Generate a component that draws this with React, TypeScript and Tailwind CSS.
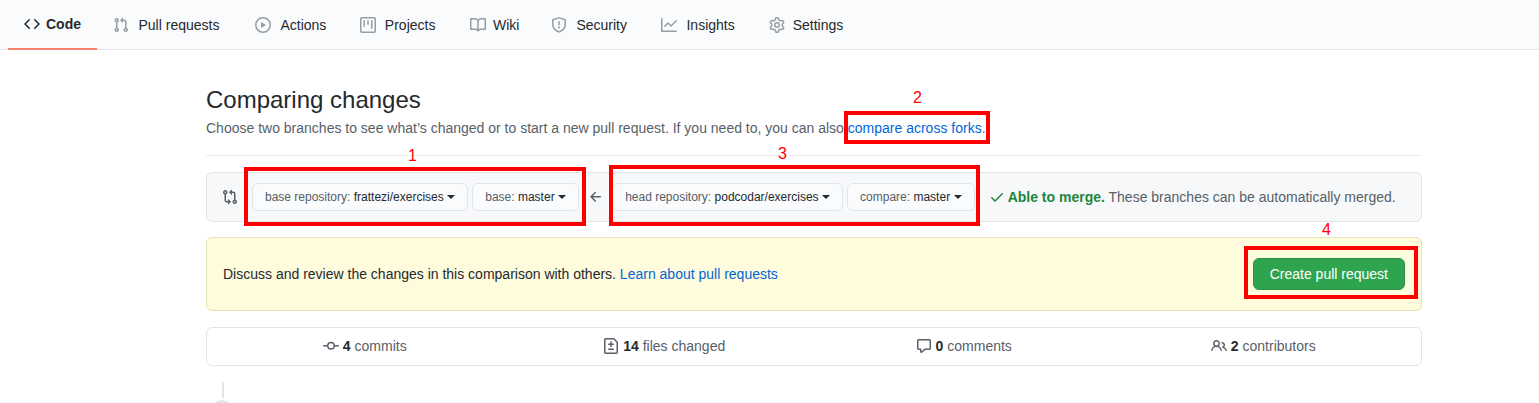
// octicons, 16px grid
const paths = {
  code: "M4.72 3.22a.75.75 0 011.06 1.06L2.06 8l3.72 3.72a.75.75 0 11-1.06 1.06L.47 8.53a.75.75 0 010-1.06l4.25-4.25zm6.56 0a.75.75 0 10-1.06 1.06L13.94 8l-3.72 3.72a.75.75 0 101.06 1.06l4.25-4.25a.75.75 0 000-1.06l-4.25-4.25z",
  pull: "M7.177 3.073L9.573.677A.25.25 0 0110 .854v4.792a.25.25 0 01-.427.177L7.177 3.427a.25.25 0 010-.354zM3.75 2.5a.75.75 0 100 1.5.75.75 0 000-1.5zm-2.25.75a2.25 2.25 0 113 2.122v5.256a2.251 2.251 0 11-1.5 0V5.372A2.25 2.25 0 011.5 3.25zM11 2.5h-1V4h1a1 1 0 011 1v5.628a2.251 2.251 0 101.5 0V5A2.5 2.5 0 0011 2.5zm1 10.25a.75.75 0 111.5 0 .75.75 0 01-1.5 0zM3.75 12a.75.75 0 100 1.5.75.75 0 000-1.5z",
  play: "M1.5 8a6.5 6.5 0 1113 0 6.5 6.5 0 01-13 0zM8 0a8 8 0 100 16A8 8 0 008 0zM6.379 5.227A.25.25 0 006 5.442v5.117a.25.25 0 00.379.214l4.264-2.559a.25.25 0 000-.428L6.379 5.227z",
  project: "M1.75 0A1.75 1.75 0 000 1.75v12.5C0 15.216.784 16 1.75 16h12.5A1.75 1.75 0 0016 14.25V1.75A1.75 1.75 0 0014.25 0H1.75zM1.5 1.75a.25.25 0 01.25-.25h12.5a.25.25 0 01.25.25v12.5a.25.25 0 01-.25.25H1.75a.25.25 0 01-.25-.25V1.75zM11.75 3a.75.75 0 00-.75.75v7.5a.75.75 0 001.5 0v-7.5a.75.75 0 00-.75-.75zm-8.25.75a.75.75 0 011.5 0v5.5a.75.75 0 01-1.5 0v-5.5zM8 3a.75.75 0 00-.75.75v3.5a.75.75 0 001.5 0v-3.5A.75.75 0 008 3z",
  book: "M0 1.75A.75.75 0 01.75 1h4.253c1.227 0 2.317.59 3 1.501A3.744 3.744 0 0111.006 1h4.245a.75.75 0 01.75.75v10.5a.75.75 0 01-.75.75h-4.507a2.25 2.25 0 00-1.591.659l-.622.621a.75.75 0 01-1.06 0l-.622-.621A2.25 2.25 0 005.258 13H.75a.75.75 0 01-.75-.75V1.75zm8.755 3a2.25 2.25 0 012.25-2.25H14.5v9h-3.757c-.71 0-1.4.201-1.992.572l.004-7.322zm-1.504 7.324l.004-5.073-.002-2.253A2.25 2.25 0 005.003 2.5H1.5v9h3.757a3.75 3.75 0 011.994.574z",
  shield: "M7.467.133a1.75 1.75 0 011.066 0l5.25 1.68A1.75 1.75 0 0115 3.48V7c0 1.566-.32 3.182-1.303 4.682-.983 1.498-2.585 2.813-5.032 3.855a1.7 1.7 0 01-1.33 0c-2.447-1.042-4.049-2.357-5.032-3.855C1.32 10.182 1 8.566 1 7V3.48a1.75 1.75 0 011.217-1.667l5.25-1.68zm.61 1.429a.25.25 0 00-.153 0l-5.25 1.68a.25.25 0 00-.174.238V7c0 1.358.275 2.666 1.057 3.86.784 1.194 2.121 2.34 4.366 3.297a.2.2 0 00.154 0c2.245-.956 3.582-2.104 4.366-3.298C13.225 9.666 13.5 8.36 13.5 7V3.48a.25.25 0 00-.174-.237l-5.25-1.68zM9 10.5a1 1 0 11-2 0 1 1 0 012 0zm-.25-5.75a.75.75 0 10-1.5 0v3a.75.75 0 001.5 0v-3z",
  graph: "M1.5 1.75a.75.75 0 00-1.5 0v12.5c0 .414.336.75.75.75h14.5a.75.75 0 000-1.5H1.5V1.75zm14.28 2.53a.75.75 0 00-1.06-1.06L10 7.94 7.53 5.47a.75.75 0 00-1.06 0L3.22 8.72a.75.75 0 001.06 1.06L7 7.06l2.47 2.47a.75.75 0 001.06 0l5.25-5.25z",
  gear: "M7.429 1.525a6.593 6.593 0 011.142 0c.036.003.108.036.137.146l.289 1.105c.147.56.55.967.997 1.189.174.086.341.183.501.29.417.278.97.423 1.53.27l1.102-.303c.11-.03.175.016.195.046.219.31.41.641.573.989.014.031.022.11-.059.19l-.815.806c-.411.406-.562.957-.53 1.456a4.588 4.588 0 010 .582c-.032.499.119 1.05.53 1.456l.815.806c.08.08.073.159.059.19a6.494 6.494 0 01-.573.99c-.02.029-.086.074-.195.045l-1.103-.303c-.559-.153-1.112-.008-1.529.27-.16.107-.327.204-.5.29-.449.222-.851.628-.998 1.189l-.289 1.105c-.029.11-.101.143-.137.146a6.613 6.613 0 01-1.142 0c-.036-.003-.108-.037-.137-.146l-.289-1.105c-.147-.56-.55-.967-.997-1.189a4.502 4.502 0 01-.501-.29c-.417-.278-.97-.423-1.53-.27l-1.102.303c-.11.03-.175-.016-.195-.046a6.492 6.492 0 01-.573-.989c-.014-.031-.022-.11.059-.19l.815-.806c.411-.406.562-.957.53-1.456a4.587 4.587 0 010-.582c.032-.499-.119-1.05-.53-1.456l-.815-.806c-.08-.08-.073-.159-.059-.19a6.44 6.44 0 01.573-.99c.02-.029.086-.075.195-.045l1.103.303c.559.153 1.112.008 1.529-.27.16-.107.327-.204.5-.29.449-.222.851-.628.998-1.189l.289-1.105c.029-.11.101-.143.137-.146zM8 0c-.236 0-.47.01-.701.03-.743.065-1.29.615-1.458 1.261l-.29 1.106c-.017.066-.078.158-.211.224a5.994 5.994 0 00-.668.386c-.123.082-.233.09-.3.071L3.27 2.776c-.644-.177-1.392.02-1.82.63a7.977 7.977 0 00-.704 1.217c-.315.675-.111 1.422.363 1.891l.815.806c.05.048.098.147.088.294a6.084 6.084 0 000 .772c.01.147-.038.246-.088.294l-.815.806c-.474.469-.678 1.216-.363 1.891.2.428.436.835.704 1.218.428.609 1.176.806 1.82.63l1.103-.303c.066-.019.176-.011.299.071.213.143.436.272.668.386.133.066.194.158.212.224l.289 1.106c.169.646.715 1.196 1.458 1.26a8.094 8.094 0 001.402 0c.743-.064 1.29-.614 1.458-1.26l.29-1.106c.017-.066.078-.158.211-.224a5.98 5.98 0 00.668-.386c.123-.082.233-.09.3-.071l1.102.302c.644.177 1.392-.02 1.82-.63.268-.382.505-.789.704-1.217.315-.675.111-1.422-.364-1.891l-.814-.806c-.05-.048-.098-.147-.088-.294a6.1 6.1 0 000-.772c-.01-.147.039-.246.088-.294l.814-.806c.475-.469.679-1.216.364-1.891a7.992 7.992 0 00-.704-1.218c-.428-.609-1.176-.806-1.82-.63l-1.103.303c-.066.019-.176.011-.299-.071a5.991 5.991 0 00-.668-.386c-.133-.066-.194-.158-.212-.224L10.16 1.29C9.99.645 9.444.095 8.701.031A8.094 8.094 0 008 0zm1.5 8a1.5 1.5 0 11-3 0 1.5 1.5 0 013 0zM11 8a3 3 0 11-6 0 3 3 0 016 0z",
  commit: "M10.5 7.75a2.5 2.5 0 11-5 0 2.5 2.5 0 015 0zm1.43.75a4.002 4.002 0 01-7.86 0H.75a.75.75 0 110-1.5h3.32a4.001 4.001 0 017.86 0h3.32a.75.75 0 110 1.5h-3.32z",
  fileDiff: "M2.75 1.5a.25.25 0 00-.25.25v12.5c0 .138.112.25.25.25h10.5a.25.25 0 00.25-.25V4.664a.25.25 0 00-.073-.177l-2.914-2.914a.25.25 0 00-.177-.073H2.75zM1 1.75C1 .784 1.784 0 2.75 0h7.586c.464 0 .909.184 1.237.513l2.914 2.914c.329.328.513.773.513 1.237v9.586A1.75 1.75 0 0113.25 16H2.75A1.75 1.75 0 011 14.25V1.75zm7 1.5a.75.75 0 01.75.75v1.5h1.5a.75.75 0 010 1.5h-1.5v1.5a.75.75 0 01-1.5 0V7h-1.5a.75.75 0 010-1.5h1.5V4A.75.75 0 018 3.25zm-3 8a.75.75 0 01.75-.75h4.5a.75.75 0 010 1.5h-4.5a.75.75 0 01-.75-.75z",
  comment: "M2.75 2.5a.25.25 0 00-.25.25v7.5c0 .138.112.25.25.25h2a.75.75 0 01.75.75v2.19l2.72-2.72a.75.75 0 01.53-.22h4.5a.25.25 0 00.25-.25v-7.5a.25.25 0 00-.25-.25H2.75zM1 2.75C1 1.784 1.784 1 2.75 1h10.5c.966 0 1.75.784 1.75 1.75v7.5A1.75 1.75 0 0113.25 12H9.06l-2.573 2.573A1.457 1.457 0 014 13.543V12H2.75A1.75 1.75 0 011 10.25v-7.5z",
  people: "M5.5 3.5a2 2 0 100 4 2 2 0 000-4zM2 5.5a3.5 3.5 0 115.898 2.549 5.507 5.507 0 013.034 4.084.75.75 0 11-1.482.235 4.001 4.001 0 00-7.9 0 .75.75 0 01-1.482-.236A5.507 5.507 0 013.102 8.05 3.49 3.49 0 012 5.5zM11 4a.75.75 0 100 1.5 1.5 1.5 0 01.666 2.844.75.75 0 00-.416.672v.352a.75.75 0 00.574.73c1.2.289 2.162 1.2 2.522 2.372a.75.75 0 101.434-.44 5.01 5.01 0 00-2.56-3.012A3 3 0 0011 4z",
  check: "M13.78 4.22a.75.75 0 010 1.06l-7.25 7.25a.75.75 0 01-1.06 0L2.22 9.28a.75.75 0 011.06-1.06L6 10.94l6.72-6.72a.75.75 0 011.06 0z",
  arrowLeft: "M7.78 12.53a.75.75 0 01-1.06 0L2.47 8.28a.75.75 0 010-1.06l4.25-4.25a.75.75 0 011.06 1.06L4.81 7h7.44a.75.75 0 010 1.5H4.81l2.97 2.97a.75.75 0 010 1.06z",
  compare: "M9.573.677L7.177 3.073a.25.25 0 000 .354l2.396 2.396A.25.25 0 0010 5.646V4h1a1 1 0 011 1v5.628a2.251 2.251 0 101.5 0V5A2.5 2.5 0 0011 2.5h-1V.854a.25.25 0 00-.427-.177zM6 12v-1.646a.25.25 0 01.427-.177l2.396 2.396a.25.25 0 010 .354l-2.396 2.396A.25.25 0 016 15.146V13.5H5A2.5 2.5 0 012.5 11V5.372a2.25 2.25 0 111.5 0V11a1 1 0 001 1h1zm6.75 0a.75.75 0 100 1.5.75.75 0 000-1.5zM4 3.25a.75.75 0 10-1.5 0 .75.75 0 001.5 0z",
};

const Octicon = ({ name, className }: { name: keyof typeof paths; className?: string }) => (
  <svg viewBox="0 0 16 16" width="16" height="16" fill="currentColor" fillRule="evenodd" className={`shrink-0 ${className ?? ""}`}>
    <path d={paths[name]} />
  </svg>
);

const tabs: { label: string; icon: keyof typeof paths; cls: string }[] = [
  { label: "Pull requests", icon: "pull", cls: "gap-[9.5px]" },
  { label: "Actions", icon: "play", cls: "ml-1 gap-[9px]" },
  { label: "Projects", icon: "project", cls: "ml-[2px] gap-[8.5px]" },
  { label: "Wiki", icon: "book", cls: "ml-[2.5px] gap-[7px]" },
  { label: "Security", icon: "shield", cls: "gap-[9px]" },
  { label: "Insights", icon: "graph", cls: "ml-[2.5px] gap-[9px]" },
  { label: "Settings", icon: "gear", cls: "ml-[2px] gap-2" },
];

const stats: { n: string; label: string; icon: keyof typeof paths }[] = [
  { n: "4", label: "commits", icon: "commit" },
  { n: "14", label: "files changed", icon: "fileDiff" },
  { n: "0", label: "comments", icon: "comment" },
  { n: "2", label: "contributors", icon: "people" },
];

const RangeButton = ({ label, value }: { label: string; value: string }) => (
  <button className="flex h-[28px] items-center rounded-md border border-[#e1e4e8] bg-[#fafbfc] px-3 text-xs whitespace-nowrap">
    <span className="text-[#586069]">{label}:&nbsp;</span>
    <span className="text-[#24292e]">{value}</span>
    <span className="ml-[3.5px] h-0 w-0 border-x-4 border-t-4 border-x-transparent border-t-[#24292e]"></span>
  </button>
);

export default function App() {
  return (
    <div className="relative h-[403px] overflow-hidden bg-white font-['Liberation_Sans',sans-serif] text-sm text-[#24292e]">
      <nav className="flex h-[50px] border-b border-[#e1e4e8] bg-[#fafbfc] pl-2">
        <a className="flex h-[50px] items-center gap-1.5 border-b-2 border-[#f9826c] px-4 font-bold">
          <Octicon name="code" />
          Code
        </a>
        {tabs.map((t) => (
          <a key={t.label} className={`flex h-[49px] items-center px-4 ${t.cls}`}>
            <Octicon name={t.icon} className="text-[#959da5]" />
            {t.label}
          </a>
        ))}
      </nav>

      <main className="ml-[206px] w-[1216px]">
        <div className="border-b border-[#eaecef] pt-[35px] pb-[17px]">
          <h1 className="text-2xl leading-[30px]">Comparing changes</h1>
          <p className="mt-[3px] leading-[20px] text-[#586069]">
            Choose two branches to see what’s changed or to start a new pull request. If you need to, you can also{" "}
            <a className="text-[#0366d6]">compare across forks</a>.
          </p>
        </div>

        <div className="mt-4 flex h-[50px] items-center rounded-md border border-[#e1e4e8] bg-[#f6f8fa] pl-[15px]">
          <Octicon name="compare" className="text-[#586069]" />
          <div className="ml-[14px] flex gap-1">
            <RangeButton label="base repository" value="frattezi/exercises" />
            <RangeButton label="base" value="master" />
          </div>
          <Octicon name="arrowLeft" className="mr-[8px] ml-[9px] text-[#586069]" />
          <div className="flex gap-1">
            <RangeButton label="head repository" value="podcodar/exercises" />
            <RangeButton label="compare" value="master" />
          </div>
          <Octicon name="check" className="ml-[14px] text-[#22863a]" />
          <span className="ml-[3px] text-[#586069]">
            <strong className="text-[#22863a]">Able to merge.</strong> These branches can be automatically merged.
          </span>
        </div>

        <div className="mt-[15px] flex h-[74px] items-center justify-between rounded-md border border-[#e6e2b5] bg-[#fffbdd] pr-4 pl-4">
          <p>
            Discuss and review the changes in this comparison with others.{" "}
            <a className="text-[#0366d6]">Learn about pull requests</a>
          </p>
          <button className="h-[32px] rounded-md border border-[#2a9147] bg-[#2ea44f] px-4 text-white">
            Create pull request
          </button>
        </div>

        <div className="mt-4 grid h-[39px] grid-cols-4 items-center rounded-md border border-[#e1e4e8] px-2 pb-[2px]">
          {stats.map((s) => (
            <div key={s.label} className="flex items-center justify-center gap-1">
              <Octicon name={s.icon} className="text-[#586069]" />
              <span className="text-[#586069]">
                <strong className="text-[#24292e]">{s.n}</strong> {s.label}
              </span>
            </div>
          ))}
        </div>

        <div className="mt-4 ml-[16px] h-[16px] w-[2px] bg-[#e1e4e8]"></div>
        <div className="mt-[2px] ml-[4px] h-6 w-6 rounded-full bg-[#e1e4e8]"></div>
      </main>

      {/* annotations drawn over the screenshot */}
      <div className="absolute top-[167px] left-[244px] h-[59px] w-[342px] border-4 border-[#ff0000]"></div>
      <div className="absolute top-[111px] left-[844px] h-[33px] w-[146px] border-4 border-[#ff0000]"></div>
      <div className="absolute top-[165px] left-[609px] h-[61px] w-[371px] border-4 border-[#ff0000]"></div>
      <div className="absolute top-[246px] left-[1244px] h-[53px] w-[174px] border-4 border-[#ff0000]"></div>
      <span className="absolute top-[147px] left-[408px] text-base leading-[18px] text-[#ff0000]">1</span>
      <span className="absolute top-[89px] left-[913px] text-base leading-[18px] text-[#ff0000]">2</span>
      <span className="absolute top-[145px] left-[778px] text-base leading-[18px] text-[#ff0000]">3</span>
      <span className="absolute top-[221px] left-[1322px] text-base leading-[18px] text-[#ff0000]">4</span>
    </div>
  );
}
